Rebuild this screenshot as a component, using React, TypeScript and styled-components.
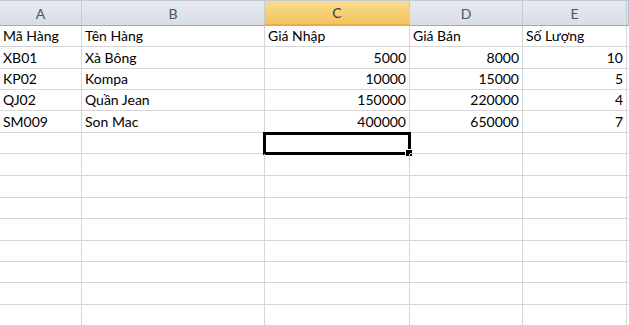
import React from 'react';
import styled, { createGlobalStyle } from 'styled-components';

const GlobalStyle = createGlobalStyle`
  html, body {
    margin: 0;
    padding: 0;
    background: #ffffff;
  }
  body {
    font-family: Lato, "Open Sans", "Liberation Sans", sans-serif;
  }
`;

const columns = [
  { name: 'A', width: 82 },
  { name: 'B', width: 183 },
  { name: 'C', width: 145 },
  { name: 'D', width: 113 },
  { name: 'E', width: 104 },
];

type Cell = string | number | undefined;

const rows: Cell[][] = [
  ['Mã Hàng', 'Tên Hàng', 'Giá Nhập', 'Giá Bán', 'Số Lượng'],
  ['XB01', 'Xà Bông', 5000, 8000, 10],
  ['KP02', 'Kompa', 10000, 15000, 5],
  ['QJ02', 'Quần Jean', 150000, 220000, 4],
  ['SM009', 'Son Mac', 400000, 650000, 7],
];

// row heights alternate between 21 and 22px like the zoomed sheet
const rowHeights = [21, 22, 21, 21, 22, 21, 22, 22, 21, 22, 21, 21, 22, 21];
const selected = { row: 5, col: 2 };

export default () => {
  return <Sheet>
    <GlobalStyle />
    <HeaderRow>
      {columns.map((c, i) => (
        <ColHeader key={c.name} $width={c.width} $active={i === selected.col}>{c.name}</ColHeader>
      ))}
      <HeaderRest />
    </HeaderRow>
    {rowHeights.map((h, r) => (
      <Row key={r} $height={h}>
        {columns.map((c, ci) => {
          const v = rows[r] ? rows[r][ci] : undefined;
          const isSel = r === selected.row && ci === selected.col;
          return <DataCell key={c.name} $width={c.width} $numeric={typeof v === 'number'}>
            {v}
            {isSel ? <Selection><FillHandle /></Selection> : undefined}
          </DataCell>;
        })}
        <RowRest />
      </Row>
    ))}
  </Sheet>;
}

const Sheet = styled.div`
  width: 629px;
  height: 325px;
  overflow: hidden;
  display: flex;
  flex-direction: column;
`;

const HeaderRow = styled.div`
  display: flex;
  height: 24px;
  border-top: 1px solid #c3cad4;
  border-bottom: 1px solid #9eaabb;
  background: linear-gradient(#e6e9ee, #dadee5);
  flex-shrink: 0;
`;

const ColHeader = styled.div<{ $width: number; $active?: boolean }>`
  width: ${p => p.$width}px;
  box-sizing: border-box;
  display: flex;
  align-items: center;
  justify-content: center;
  border-right: 1px solid #c5ccd6;
  font-size: 14px;
  color: #4a5565;
  ${p => p.$active ? `
    background: linear-gradient(#f9dc8f, #f2c35f);
    color: #3d3a30;
    border-bottom: 2px solid #f1ad3c;
    margin-bottom: -1px;
  ` : ''}
`;

const HeaderRest = styled.div`
  flex: 1;
  border-right: 1px solid #b8c0cc;
`;

const Row = styled.div<{ $height: number }>`
  display: flex;
  height: ${p => p.$height}px;
  flex-shrink: 0;
`;

const DataCell = styled.div<{ $width: number; $numeric?: boolean }>`
  position: relative;
  width: ${p => p.$width}px;
  box-sizing: border-box;
  border-right: 1px solid #d6d6d6;
  border-bottom: 1px solid #d6d6d6;
  display: flex;
  align-items: flex-end;
  justify-content: ${p => p.$numeric ? 'flex-end' : 'flex-start'};
  padding: 0 3px 2px 3px;
  font-size: 14px;
  color: #000000;
  white-space: nowrap;
`;

const RowRest = styled.div`
  flex: 1;
  border-bottom: 1px solid #d6d6d6;
`;

const Selection = styled.div`
  position: absolute;
  left: -2px;
  top: -1px;
  right: -2px;
  bottom: -2px;
  border: 3px solid #000000;
  pointer-events: none;
`;

const FillHandle = styled.div`
  position: absolute;
  right: -5px;
  bottom: -5px;
  width: 6px;
  height: 6px;
  background: #000000;
  border: 1px solid #ffffff;
`;
